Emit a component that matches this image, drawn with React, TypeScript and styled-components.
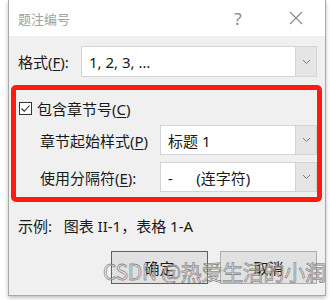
import styled, { createGlobalStyle } from "styled-components";

const GlobalStyle = createGlobalStyle`
   html, body {
      margin: 0;
      padding: 0;
      background: #ffffff;
      font-family: "Noto Sans", "Noto Sans CJK SC", sans-serif;
   }
`;

const Page = styled.div`
   position: relative;
   width: 330px;
   height: 300px;
   overflow: hidden;
`;

const Dialog = styled.div`
   margin-left: 8px;
   width: 318px;
   height: 296px;
   box-sizing: border-box;
   border: 1px solid #a8a8a8;
   border-top: none;
   background: #f0f0f0;
   box-shadow: 0 2px 4px rgba(0, 0, 0, 0.25);
   display: flex;
   flex-direction: column;
`;

const TitleBar = styled.div`
   height: 36px;
   background: #ffffff;
   display: flex;
   align-items: center;
   padding-left: 9px;
   color: #a0a0a0;
   font-size: 13px;
`;

const Title = styled.span`
   flex: 1;
`;

const TitleButton = styled.span<{ $w: number }>`
   width: ${(p) => p.$w}px;
   display: flex;
   justify-content: center;
   align-items: center;
   color: #8a8a8a;
   font-size: 17px;
`;

const Body = styled.div`
   flex: 1;
   padding: 10px 8px 0 9px;
   display: flex;
   flex-direction: column;
   color: #1a1a1a;
   font-size: 15px;
`;

const FieldRow = styled.div<{ $indent?: number }>`
   display: flex;
   align-items: center;
   height: ${(p) => (p.$indent ? 30 : 31)}px;
   padding-left: ${(p) => p.$indent || 0}px;
`;

const Label = styled.span<{ $w: number }>`
   width: ${(p) => p.$w}px;
   white-space: nowrap;
`;

const Key = styled.span`
   text-decoration: underline;
   text-underline-offset: 2px;
`;

const Combo = styled.div`
   flex: 1;
   height: 100%;
   box-sizing: border-box;
   border: 1px solid #d4d4d4;
   background: #ffffff;
   display: flex;
   align-items: stretch;
`;

const ComboText = styled.span`
   flex: 1;
   display: flex;
   align-items: center;
   padding-left: 7px;
   white-space: pre;
`;

const ComboButton = styled.span`
   width: 20px;
   background: #e5e5e5;
   border-left: 1px solid #d4d4d4;
   display: flex;
   align-items: center;
   justify-content: center;
`;

const Group = styled.div`
   position: relative;
   margin-top: 8px;
   height: 117px;
   box-sizing: border-box;
   padding-top: 15px;
   display: flex;
   flex-direction: column;
   gap: 7px;
`;

const RedFrame = styled.div`
   position: absolute;
   left: -7px;
   right: -5px;
   top: 0;
   bottom: 0;
   border: 5px solid #ff1a12;
   border-radius: 5px;
   pointer-events: none;
`;

const CheckRow = styled.div`
   display: flex;
   align-items: center;
   height: 17px;
   margin-left: 1px;
   margin-bottom: 1px;
   gap: 5px;
`;

const CheckBox = styled.span`
   width: 13px;
   height: 13px;
   box-sizing: border-box;
   border: 1px solid #333333;
   background: #ffffff;
   display: flex;
   align-items: center;
   justify-content: center;
`;

const Example = styled.div`
   margin-top: 14px;
   height: 20px;
   line-height: 20px;
   white-space: pre;
`;

const Buttons = styled.div`
   margin-top: 15px;
   display: flex;
   justify-content: flex-end;
   gap: 12px;
`;

const Button = styled.div<{ $primary?: boolean }>`
   width: 97px;
   height: 33px;
   box-sizing: border-box;
   border: 1px solid ${(p) => (p.$primary ? "#0078d7" : "#adadad")};
   background: #e1e1e1;
   display: flex;
   align-items: center;
   justify-content: center;
`;

const Watermark = styled.div`
   position: absolute;
   left: 103px;
   top: 256px;
   font-size: 21px;
   font-family: "Noto Sans CJK SC", sans-serif;
   color: rgba(235, 235, 235, 0.55);
   -webkit-text-stroke: 0.8px rgba(110, 110, 110, 0.75);
   white-space: nowrap;
   letter-spacing: -0.3px;
`;

const Chevron = () => (
   <svg width="9" height="6" viewBox="0 0 9 6">
      <path d="M1 1 L4.5 4.5 L8 1" fill="none" stroke="#7a7a7a" strokeWidth="1" />
   </svg>
);

const Check = () => (
   <svg width="11" height="11" viewBox="0 0 11 11">
      <path d="M1.5 5.5 L4.3 8.3 L9.5 2.5" fill="none" stroke="#222" strokeWidth="1.1" />
   </svg>
);

const Close = () => (
   <svg width="14" height="14" viewBox="0 0 14 14">
      <path d="M1 1 L13 13 M13 1 L1 13" stroke="#8a8a8a" strokeWidth="1.1" />
   </svg>
);

export default function App() {
   return (
      <Page>
         <GlobalStyle />
         <Dialog>
            <TitleBar>
               <Title>题注编号</Title>
               <TitleButton $w={58}>?</TitleButton>
               <TitleButton $w={58}>
                  <Close />
               </TitleButton>
            </TitleBar>
            <Body>
               <FieldRow>
                  <Label $w={63}>
                     格式(<Key>F</Key>):
                  </Label>
                  <Combo>
                     <ComboText>1, 2, 3, …</ComboText>
                     <ComboButton>
                        <Chevron />
                     </ComboButton>
                  </Combo>
               </FieldRow>
               <Group>
                  <CheckRow>
                     <CheckBox>
                        <Check />
                     </CheckBox>
                     <span>
                        包含章节号(<Key>C</Key>)
                     </span>
                  </CheckRow>
                  <FieldRow $indent={22}>
                     <Label $w={120}>
                        章节起始样式(<Key>P</Key>)
                     </Label>
                     <Combo>
                        <ComboText>标题 1</ComboText>
                        <ComboButton>
                           <Chevron />
                        </ComboButton>
                     </Combo>
                  </FieldRow>
                  <FieldRow $indent={22}>
                     <Label $w={120}>
                        使用分隔符(<Key>E</Key>):
                     </Label>
                     <Combo>
                        <ComboText>-      (连字符)</ComboText>
                        <ComboButton>
                           <Chevron />
                        </ComboButton>
                     </Combo>
                  </FieldRow>
                  <RedFrame />
               </Group>
               <Example>示例:   图表 II-1，表格 1-A</Example>
               <Buttons>
                  <Button $primary>确定</Button>
                  <Button>取消</Button>
               </Buttons>
            </Body>
         </Dialog>
         <Watermark>CSDN @热爱生活的小润</Watermark>
      </Page>
   );
}
